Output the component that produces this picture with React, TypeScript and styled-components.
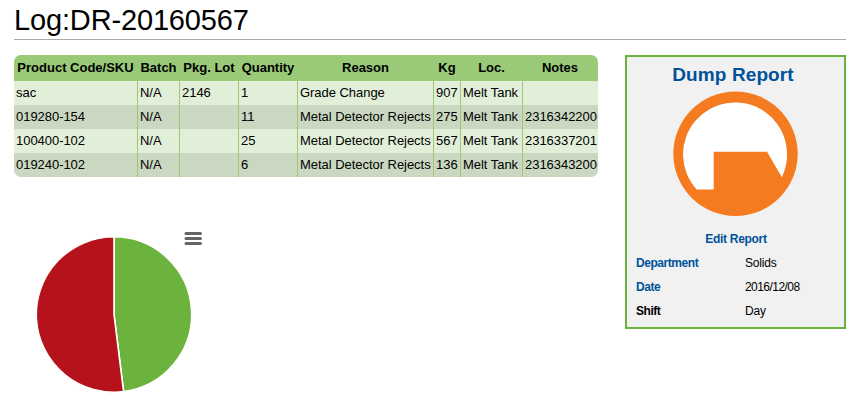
import React from "react";
import styled, { createGlobalStyle } from "styled-components";

const GlobalStyle = createGlobalStyle`
  * { box-sizing: border-box; }
  body {
    margin: 0;
    background: #fff;
    color: #000;
    font-family: "Liberation Sans", Arial, sans-serif;
    font-size: 13px;
  }
`;

const Page = styled.main`
  padding: 0 7px 0 14px;
`;

const Title = styled.h1`
  margin: 0 0 15px;
  height: 40px;
  padding-top: 3px;
  border-bottom: 1px solid #aaa;
  font-size: 29px;
  font-weight: 400;
  line-height: 34px;
  letter-spacing: -0.15px;
`;

const Content = styled.div`
  display: flex;
  justify-content: space-between;
  align-items: flex-start;
`;

const Table = styled.table`
  width: 584px;
  table-layout: fixed;
  border-collapse: separate;
  border-spacing: 0;
  border-radius: 7px;
  overflow: hidden;
`;

const Col = styled.col<{ $width: number }>`
  width: ${(p) => p.$width}px;
`;

const HeadCell = styled.th`
  height: 26px;
  padding: 0 1px 0 0;
  background: #9aca78;
  line-height: 24px;
  white-space: nowrap;
  text-align: center;
`;

const Row = styled.tr`
  background: #e1efd8;
  &:nth-child(even) {
    background: #cad8c1;
  }
`;

const Cell = styled.td`
  height: 24px;
  padding: 0 0 0 2px;
  border-right: 1px solid #9aca78;
  line-height: 24px;
  letter-spacing: -0.04px;
  white-space: nowrap;
  &:last-child {
    border-right: 0;
  }
`;

const Chart = styled.div`
  display: flex;
  align-items: flex-start;
  margin-top: 53px;
  padding-left: 22px;
`;

const Pie = styled.svg`
  display: block;
  margin-top: 6px;
`;

const MenuButton = styled.button`
  margin-left: -10px;
  padding: 0;
  border: 0;
  background: none;
  display: block;
  svg {
    display: block;
  }
`;

const Panel = styled.aside`
  width: 221px;
  height: 274px;
  border: 2px solid #6cb33e;
  background: #f1f1f1;
  display: flex;
  flex-direction: column;
  align-items: center;
  font-size: 12px;
`;

const PanelTitle = styled.h2`
  margin: 5px 0 0 -5px;
  color: #00529b;
  font-size: 19px;
  line-height: 25px;
  letter-spacing: 0.1px;
`;

const Logo = styled.svg`
  display: block;
  margin-top: 4px;
`;

const EditLink = styled.a`
  margin: 10px 0 0 1px;
  color: #00529b;
  font-weight: 700;
  line-height: 24px;
  letter-spacing: -0.3px;
`;

const Details = styled.dl`
  margin: 0;
  width: 100%;
  padding-left: 9px;
  display: grid;
  grid-template-columns: 109px 1fr;
  line-height: 24px;
`;

const Term = styled.dt<{ $link?: boolean }>`
  font-weight: 700;
  letter-spacing: -0.45px;
  color: ${(p) => (p.$link ? "#00529b" : "#000")};
`;

const Value = styled.dd<{ $tight?: boolean }>`
  margin: 0;
  letter-spacing: ${(p) => (p.$tight ? "-0.55px" : "-0.2px")};
`;

const columns = [
  { label: "Product Code/SKU", width: 124 },
  { label: "Batch", width: 42 },
  { label: "Pkg. Lot", width: 59 },
  { label: "Quantity", width: 59 },
  { label: "Reason", width: 136 },
  { label: "Kg", width: 27 },
  { label: "Loc.", width: 62 },
  { label: "Notes", width: 75 },
];

const rows = [
  ["sac", "N/A", "2146", "1", "Grade Change", "907", "Melt Tank", ""],
  ["019280-154", "N/A", "", "11", "Metal Detector Rejects", "275", "Melt Tank", "2316342200"],
  ["100400-102", "N/A", "", "25", "Metal Detector Rejects", "567", "Melt Tank", "2316337201"],
  ["019240-102", "N/A", "", "6", "Metal Detector Rejects", "136", "Melt Tank", "2316343200"],
];

export default function App() {
  return (
    <Page>
      <GlobalStyle />
      <Title>Log:DR-20160567</Title>
      <Content>
        <div>
          <Table>
            <colgroup>
              {columns.map((c) => (
                <Col key={c.label} $width={c.width} />
              ))}
            </colgroup>
            <thead>
              <tr>
                {columns.map((c) => (
                  <HeadCell key={c.label}>{c.label}</HeadCell>
                ))}
              </tr>
            </thead>
            <tbody>
              {rows.map((row) => (
                <Row key={row[0]}>
                  {row.map((value, i) => (
                    <Cell key={i}>{value}</Cell>
                  ))}
                </Row>
              ))}
            </tbody>
          </Table>
          <Chart>
            <Pie width="158" height="158" viewBox="36 236 158 158">
              <g stroke="#fff" strokeWidth="1.6" strokeLinejoin="round">
                <path d="M114 314.5V236.8A77.7 77.7 0 0 1 123.6 391.6Z" fill="#6cb33e" />
                <path d="M114 314.5L123.6 391.6A77.7 77.7 0 1 1 114 236.8Z" fill="#b5121b" />
              </g>
            </Pie>
            <MenuButton aria-label="Chart menu">
              <svg width="18" height="18" viewBox="184 230 18 18">
                <path
                  d="M186 233.5H200.5M186 238.5H200.5M186 243.5H200.5"
                  stroke="#666"
                  strokeWidth="3"
                  strokeLinecap="round"
                />
              </svg>
            </MenuButton>
          </Chart>
        </div>
        <Panel>
          <PanelTitle>Dump Report</PanelTitle>
          <Logo width="126" height="126" viewBox="672.9 91 126 126">
            <circle cx="735.4" cy="153.8" r="62.2" fill="#f47b20" />
            <path
              d="M696.7 189.6A52 52 0 1 1 781.7 177.2L767 151.7H713.6V189.6Z"
              fill="#fff"
            />
          </Logo>
          <EditLink>Edit Report</EditLink>
          <Details>
            <Term $link>Department</Term>
            <Value>Solids</Value>
            <Term $link>Date</Term>
            <Value $tight>2016/12/08</Value>
            <Term>Shift</Term>
            <Value>Day</Value>
          </Details>
        </Panel>
      </Content>
    </Page>
  );
}
